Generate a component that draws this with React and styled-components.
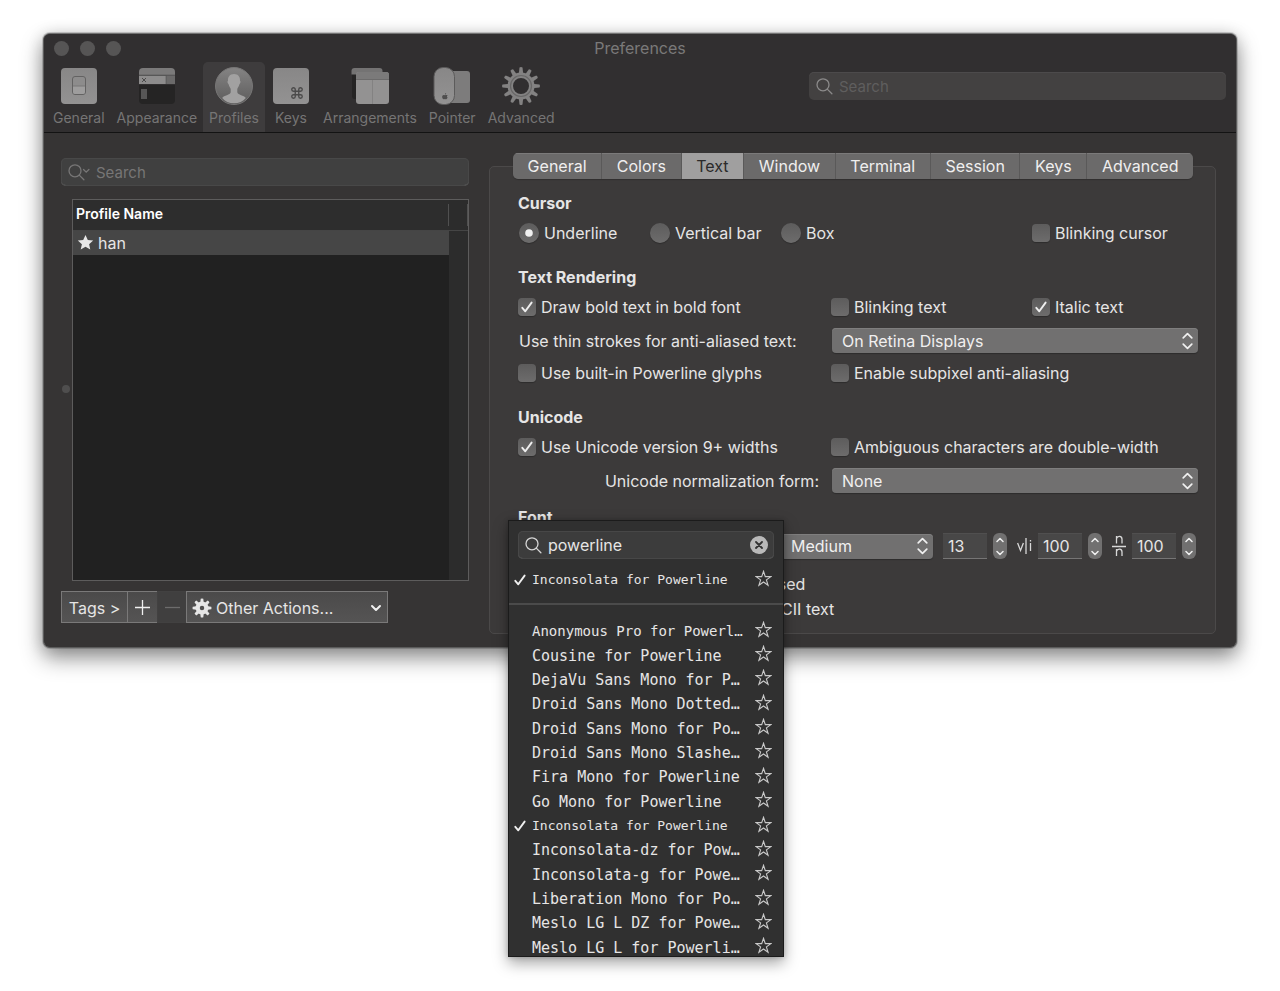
import React from "react";
import styled, { createGlobalStyle, css } from "styled-components";
import { Command } from "lucide-react";

const GlobalStyle = createGlobalStyle`
  *, *::before, *::after { box-sizing: border-box; }
  body { margin: 0; background: #fff; }
  body, button, input, select {
    font-family: Inter, "Liberation Sans", sans-serif;
    font-size: 16px;
    line-height: 24px;
    color: #e6e5e5;
  }
  button, input, select { margin: 0; padding: 0; border: 0; outline: 0; }
  h2 { margin: 0; }
`;

const Page = styled.div`
  min-height: 100vh;
  padding: 33px 43px;
`;

const Window = styled.main`
  border: 1px solid #5c5c5c;
  border-top-color: #727272;
  border-radius: 7px;
  background: #363434;
  box-shadow: 0 0 0 1px rgba(0, 0, 0, 0.16), 0 10px 22px rgba(0, 0, 0, 0.42), 0 2px 16px rgba(0, 0, 0, 0.16);
`;

const Header = styled.header`
  background: #312f30;
  border-bottom: 1px solid #131313;
  border-radius: 6px 6px 0 0;
`;

const TitleBar = styled.div`
  display: grid;
  grid-template-columns: 1fr auto 1fr;
  align-items: center;
  height: 28px;
  padding: 0 10px;
  color: #7a7979;
`;

const Lights = styled.div`
  display: flex;
  gap: 11px;
`;

const Light = styled.button`
  width: 15px;
  height: 15px;
  border-radius: 50%;
  background: #565555;
`;

const ToolRow = styled.div`
  display: flex;
  justify-content: space-between;
  padding: 0 10px 0 3px;
`;

const Tools = styled.nav`
  display: flex;
`;

const Tool = styled.button`
  display: flex;
  flex-direction: column;
  align-items: center;
  min-width: 50px;
  height: 70px;
  padding: 4px 6px 0;
  border-radius: 5px 5px 0 0;
  background: ${(p) => (p.$active ? "#3e3c3d" : "transparent")};
  color: #767575;
  font-size: 14px;
  line-height: 24px;

  svg { display: block; }
`;

const searchTones = {
  toolbar: css`background: #434141; box-shadow: inset 0 1px #4c4a4b; --hint: #5f5e5e; --glyph: #8b8a8a;`,
  list: css`background: #404040; box-shadow: inset 0 0 0 1px #484848, inset 0 -1px #686767; --hint: #777676; --glyph: #777676;`,
  menu: css`background: #3c3c3c; box-shadow: inset 0 0 0 1px #474747, inset 0 -1px #5e5e5e; --hint: #777; --glyph: #d6d6d6;`,
};

const SearchBox = styled.label`
  display: flex;
  align-items: center;
  gap: 6px;
  height: 28px;
  padding: 0 6px;
  border-radius: 5px;
  ${(p) => searchTones[p.$tone]}

  > svg { flex: none; color: var(--glyph); }
  input { flex: 1; min-width: 0; background: transparent; font-size: 16px; }
  input::placeholder { color: var(--hint); opacity: 1; font-size: 15px; }
`;

const ToolbarSearch = styled.div`
  flex: 0 1 417px;
  padding-top: 10px;
`;

const Body = styled.div`
  display: flex;
  gap: 20px;
  padding: 0 20px 0 17px;
`;

const Sidebar = styled.section`
  position: relative;
  flex: 408 1 0;
  min-width: 0;
  display: flex;
  flex-direction: column;
  padding: 25px 0 24px;
`;

const SplitDot = styled.span`
  position: absolute;
  left: 1px;
  top: 252px;
  width: 8px;
  height: 8px;
  border-radius: 50%;
  background: #4f4e4e;
`;

const ProfileList = styled.div`
  flex: 1;
  display: flex;
  margin: 13px 0 10px 11px;
  border: 1px solid #5d5c5c;
  background: #212121;
`;

const ProfileTable = styled.table`
  flex: 1;
  align-self: flex-start;
  border-collapse: collapse;

  th {
    height: 30px;
    padding: 0 3px 2px;
    border-bottom: 1px solid #454545;
    background: #2d2d2d;
    color: #fff;
    font-size: 14px;
    font-weight: 600;
    text-align: left;
  }
  td { height: 25px; padding: 0; background: #464646; }
`;

const ProfileName = styled.div`
  display: flex;
  align-items: center;
  gap: 4px;
  padding-left: 4px;
`;

const Gutter = styled.div`
  width: 19px;
  background: #2c2c2c;
`;

const GutterHead = styled.div`
  height: 31px;
  padding-top: 4px;
  border-bottom: 1px solid #454545;

  &::before {
    content: "";
    display: block;
    height: 22px;
    border-left: 1px solid #505050;
    border-right: 1px solid #505050;
    margin-left: -1px;
  }
`;

const Actions = styled.div`
  display: flex;
`;

const ActionButton = styled.button`
  display: flex;
  align-items: center;
  justify-content: center;
  gap: 4px;
  width: ${(p) => p.$width};
  height: 32px;
  padding-top: 1px;
  margin-right: -1px;
  border: 1px solid #7a7979;
  background: linear-gradient(#4b4a4a, #555454);

  &:disabled { border-color: #424141; background: #403f3f; color: #6d6c6c; }
  > svg:nth-of-type(2) { margin-left: auto; }
  ${(p) => p.$wide && css`justify-content: flex-start; padding: 1px 5px 0;`}
`;

const Detail = styled.section`
  flex: 727 1 0;
  min-width: 0;
  padding: 33px 0 13px;
`;

const Panel = styled.div`
  padding: 0 17px 12px 28px;
  border: 1px solid #4b4949;
  border-radius: 5px;
  background: #3c3a3a;
`;

const Tabs = styled.div`
  display: flex;
  margin: -14px 5px 12px -5px;
  border-radius: 5px;
  overflow: hidden;
  box-shadow: 0 1px 1px rgba(0, 0, 0, 0.2);
`;

const Tab = styled.button`
  flex: 1 1 auto;
  height: 26px;
  padding: 0 12px;
  background: ${(p) => (p.$active ? "#a09f9f" : "#6b6a6a")};
  color: ${(p) => (p.$active ? "#2b2a2a" : "#f0efef")};
  box-shadow: inset 0 1px ${(p) => (p.$active ? "#a09f9f" : "#7b7a7a")};

  & + & { border-left: 1px solid #5a5959; }
`;

const Heading = styled.h2`
  font-size: 16px;
  line-height: 24px;
  font-weight: 700;
  margin-bottom: 6px;
`;

const Group = styled.div`
  margin-bottom: ${(p) => (p.$tight ? 13 : 20)}px;
`;

const Row = styled.div`
  display: grid;
  grid-template-columns: minmax(0, 313fr) minmax(0, 201fr) minmax(0, 166fr);
  align-items: center;
  height: 24px;

  & + & { margin-top: 9px; }
`;

const Radios = styled.div`
  grid-column: span 2;
  display: grid;
  grid-template-columns: 131px 131px 1fr;
  padding-left: 1px;
`;

const OptionLabel = styled.label`
  display: flex;
  align-items: center;
  gap: 5px;
  white-space: nowrap;
`;

const Mark = styled.span`
  display: grid;
  flex: none;
  place-items: center;

  > * { grid-area: 1 / 1; }
  svg { pointer-events: none; }
  input {
    appearance: none;
    width: ${(p) => (p.$round ? 20 : 18)}px;
    height: ${(p) => (p.$round ? 20 : 18)}px;
    border-radius: ${(p) => (p.$round ? "50%" : "4px")};
    background: linear-gradient(#5d5c5c, #6d6c6c);
    box-shadow: 0 1px 1px rgba(0, 0, 0, 0.25);
  }
`;

const FieldLabel = styled.label`
  padding: 0 12px 0 1px;
  text-align: ${(p) => (p.$right ? "right" : "left")};
  white-space: nowrap;
`;

const SelectWrap = styled.span`
  grid-column: span 2;
  display: grid;
  align-items: center;
  height: 25px;
  flex: ${(p) => p.$flex || "none"};
  min-width: 0;
  margin-left: ${(p) => (p.$flex ? 0 : "1px")};

  > * { grid-area: 1 / 1; }
  svg { justify-self: end; margin-right: 4px; pointer-events: none; }
  select {
    appearance: none;
    width: 100%;
    height: 25px;
    padding: 0 26px 0 10px;
    border-radius: 4px;
    background: #717070;
    box-shadow: inset 0 1px #7f7e7e, 0 1px 1px rgba(0, 0, 0, 0.25);
    color: #f0efef;
  }
`;

const FontArea = styled.div`
  position: relative;
`;

const FontRow = styled.div`
  display: flex;
  align-items: center;
  height: 26px;
  margin: -2px 2px 12px 0;
`;

const NumberGroup = styled.div`
  display: flex;
  align-items: center;
  gap: 6px;
  margin-left: 10px;

  input {
    width: 44px;
    height: 26px;
    padding: 0 5px;
    background: #484747;
    box-shadow: inset 0 1px #504f4f, inset 0 -1px #767575;
  }
`;

const Stepper = styled.span`
  display: flex;
  flex-direction: column;
  width: 14px;
  height: 26px;
  border-radius: 6px;
  overflow: hidden;

  button {
    display: grid;
    place-items: center;
    height: 13px;
    background: #717070;
  }
`;

const FontOptions = styled.div`
  display: flex;
  height: 25px;
  padding-left: ${(p) => p.$indent};
`;

const FontMenu = styled.div`
  position: absolute;
  z-index: 2;
  left: -10px;
  top: 15px;
  width: 276px;
  height: 437px;
  overflow: hidden;
  border: 1px solid #1b1b1b;
  background: #303030;
  box-shadow: 0 6px 14px rgba(0, 0, 0, 0.36), 0 0 5px rgba(0, 0, 0, 0.2);
`;

const MenuSearch = styled.div`
  padding: 10px 9px 9px;
`;

const Clear = styled.button`
  display: grid;
  place-items: center;
  width: 18px;
  height: 18px;
  border-radius: 50%;
  background: #b9b9b9;
  color: #333;
`;

const FontList = styled.ul`
  display: flex;
  flex-direction: column;
  height: ${(p) => p.$height};
  margin: 0;
  padding: 0;
  list-style: none;
`;

const Divider = styled.hr`
  height: 2px;
  margin: 11px 0 14px;
  border: 0;
  background: #4b4b4b;
`;

const FontItem = styled.li`
  flex: 1;
  display: grid;
  grid-template-columns: 23px 1fr 28px;
  align-items: center;
  min-height: 0;
  font-family: "${(p) => p.$face}", monospace;
  font-size: ${(p) => p.$size}px;
  line-height: 24px;
  white-space: nowrap;

  button { display: grid; padding-bottom: 4px; background: transparent; }
  > svg { margin-left: 4px; }
`;

const SearchIcon = ({ arrow }) => (
  <svg width={arrow ? 23 : 18} height="18" viewBox={`0 0 ${arrow ? 23 : 18} 18`} fill="none" stroke="currentColor" strokeWidth="1.3" strokeLinecap="round">
    <circle cx="8" cy="7.8" r="6" />
    <path d="M12.500 12.400 16.900 16.800" />
    {arrow && <path d="m16.500 6.500 2.700 2.700 2.700-2.700" />}
  </svg>
);

const CheckIcon = ({ size = 14 }) => (
  <svg width={size} height={size} viewBox="0 0 14 14" fill="none" stroke="#efefef" strokeWidth="1.9" strokeLinecap="round" strokeLinejoin="round">
    <path d="M2.300 7.800 5.300 11.300 11.600 2.600" />
  </svg>
);

const PopIcon = () => (
  <svg width="13" height="18" viewBox="0 0 13 18" fill="none" stroke="#f0f0f0" strokeWidth="1.7" strokeLinecap="round" strokeLinejoin="round">
    <path d="m2.200 5.800 4.300-4.100 4.300 4.100M2.200 12.200l4.300 4.100 4.300-4.100" />
  </svg>
);

const Chevron = ({ up, width = 8 }) => (
  <svg width={width} height={width === 8 ? 6 : 8} viewBox="0 0 8 6" fill="none" stroke="#f0f0f0" strokeWidth="1.5" strokeLinecap="round" strokeLinejoin="round">
    <path d={up ? "M1 4.500 4 1.500 7 4.500" : "M1 1.500 4 4.500 7 1.500"} />
  </svg>
);

const STAR = "M8.500 1.300 10.300 6.600H15.900L11.400 9.900 13.100 15.300 8.500 12 3.900 15.300 5.600 9.900 1.100 6.600H6.700Z";

const Star = ({ filled }) => (
  <svg width="17" height="17" viewBox="0 0 17 17" fill={filled ? "#e6e6e6" : "none"} stroke={filled ? "none" : "#c9c9c9"} strokeWidth="1.1">
    <path d={filled ? "M8.500 1 10.800 6.100 16.200 6.600 12.100 10.200 13.300 15.600 8.500 12.700 3.700 15.600 4.900 10.200.8 6.600 6.200 6.100Z" : STAR} />
  </svg>
);

const Gear = ({ size, teeth, color, hole, body, toothWidth }) => (
  <svg width={size} height={size} viewBox="-20 -20 40 40" fill={color}>
    {Array.from({ length: teeth }, (_, i) => (
      <path
        key={i}
        transform={`rotate(${(i * 360) / teeth})`}
        d={`M${-toothWidth - 0.8} -11 L${-toothWidth} -18.500 Q0 -19.500 ${toothWidth} -18.500 L${toothWidth + 0.8} -11Z`}
      />
    ))}
    <circle r={(body + hole) / 2} fill="none" stroke={color} strokeWidth={body - hole} />
    {size > 30 && <circle r="10.500" fill="none" stroke="#686767" strokeWidth="1.200" />}
  </svg>
);

const ToolIcon = ({ children }) => (
  <svg width="40" height="40" viewBox="0 0 40 40">
    <defs>
      <linearGradient id="plate" x2="0" y2="1">
        <stop stopColor="#888787" />
        <stop offset="1" stopColor="#939292" />
      </linearGradient>
      <linearGradient id="disc" x2="0" y2="1">
        <stop stopColor="#858484" />
        <stop offset="1" stopColor="#5c5b5b" />
      </linearGradient>
    </defs>
    {children}
  </svg>
);

const tools = [
  {
    name: "General",
    icon: (
      <ToolIcon>
        <rect x="2" y="2" width="36" height="36" rx="4" fill="url(#plate)" />
        <rect x="13.500" y="10.500" width="13" height="18" rx="2.500" fill="#8d8c8c" stroke="#636262" />
        <path d="M14 20h12v6q0 2-2 2h-8q-2 0-2-2z" fill="#9e9d9d" />
        <path d="M14 20h12" stroke="#777676" />
      </ToolIcon>
    ),
  },
  {
    name: "Appearance",
    icon: (
      <ToolIcon>
        <path d="M2 19h36v15q0 4-4 4H6q-4 0-4-4z" fill="#252424" />
        <path d="M2 9V6q0-4 4-4h28q4 0 4 4v3z" fill="#7b7a7a" />
        <path d="M2 9.500h36V18H2z" fill="#8d8c8c" />
        <path d="M29.500 9.500H38V18h-8.500z" fill="#6b6a6a" />
        <path d="M2 9.200h36M29.200 9v9" stroke="#555454" />
        <path d="m5 12 4 4m0-4-4 4" stroke="#4b4a4a" />
        <rect x="4" y="23" width="6" height="10" fill="#575656" />
      </ToolIcon>
    ),
  },
  {
    name: "Profiles",
    active: true,
    icon: (
      <ToolIcon>
        <circle cx="20" cy="20" r="18.500" fill="url(#disc)" stroke="#777676" />
        <path
          d="M20 8c-4.200 0-6.300 2.900-6 6.800-.8.200-.7 2.400.7 3.700.5 2.200 1.600 3.300 2 4.400v3.400c-.6 2.700-6.700 3.200-8.500 5.600C11 35.500 15 37.200 20 37.200s9-1.700 11.800-5.300c-1.800-2.400-7.900-2.900-8.500-5.600v-3.400c.4-1.100 1.500-2.200 2-4.400 1.400-1.300 1.500-3.500.7-3.700.3-3.900-1.800-6.800-6-6.800Z"
          fill="#a2a1a1"
        />
      </ToolIcon>
    ),
  },
  {
    name: "Keys",
    icon: (
      <ToolIcon>
        <rect x="2" y="2" width="36" height="36" rx="4" fill="url(#plate)" />
        <Command x="19" y="20" width="14" height="14" color="#4b4a4a" strokeWidth={2.3} />
      </ToolIcon>
    ),
  },
  {
    name: "Arrangements",
    icon: (
      <ToolIcon>
        <path d="M2 8h6v25H5q-3 0-3-3z" fill="#252424" />
        <path d="M1.500 8.500V5q0-3 3-3h25q3 0 3 3v3.500z" fill="#747373" />
        <rect x="6" y="6" width="33" height="32" rx="3" fill="#939292" />
        <path d="M6 13.500V9q0-3 3-3h27q3 0 3 3v4.500z" fill="#7b7a7a" />
        <path d="M6 13.500h33" stroke="#6c6b6b" />
        <path d="M22.500 14v24" stroke="#838282" />
      </ToolIcon>
    ),
  },
  {
    name: "Pointer",
    icon: (
      <ToolIcon>
        <rect x="15" y="5" width="23" height="32" rx="3" fill="#7d7c7c" />
        <rect x="2" y="1.500" width="20.500" height="37" rx="9" fill="url(#plate)" stroke="#5c5b5b" />
        <path d="M13 28.500c.8-.2 1.200-.8 1.100-1.600-.8.100-1.200.8-1.100 1.600Zm-.1.700c-.8 0-1.700-.5-2.500.5-.7 1.200.1 3.300 1.200 3.500.5 0 .9-.3 1.300-.3s.8.300 1.300.3c.7-.1 1.200-1 1.400-1.600-1-.6-.8-1.600 0-2.100-.8-.8-1.600-.3-2.700-.3Z" fill="#4f4e4e" />
      </ToolIcon>
    ),
  },
  { name: "Advanced", icon: <Gear size={40} teeth={12} color="#838282" hole={8} body={13.5} toothWidth={1.5} /> },
];

const tabs = ["General", "Colors", "Text", "Window", "Terminal", "Session", "Keys", "Advanced"];

const fonts = [
  ["Anonymous Pro for Powerl…", "DejaVu Sans Mono", 14],
  ["Cousine for Powerline", "DejaVu Sans Mono", 15],
  ["DejaVu Sans Mono for P…", "DejaVu Sans Mono", 15],
  ["Droid Sans Mono Dotted…", "DejaVu Sans Mono", 15],
  ["Droid Sans Mono for Po…", "DejaVu Sans Mono", 15],
  ["Droid Sans Mono Slashe…", "DejaVu Sans Mono", 15],
  ["Fira Mono for Powerline", "DejaVu Sans Mono", 15],
  ["Go Mono for Powerline", "DejaVu Sans Mono", 15],
  ["Inconsolata for Powerline", "DejaVu Sans Mono", 13, true],
  ["Inconsolata-dz for Pow…", "DejaVu Sans Mono", 15],
  ["Inconsolata-g for Powe…", "DejaVu Sans Mono", 15],
  ["Liberation Mono for Po…", "DejaVu Sans Mono", 15],
  ["Meslo LG L DZ for Powe…", "DejaVu Sans Mono", 15],
  ["Meslo LG L for Powerli…", "DejaVu Sans Mono", 15],
];

const Check = ({ label, checked }) => (
  <OptionLabel>
    <Mark>
      <input type="checkbox" defaultChecked={checked} />
      {checked && <CheckIcon />}
    </Mark>
    {label}
  </OptionLabel>
);

const Radio = ({ label, checked }) => (
  <OptionLabel>
    <Mark $round>
      <input type="radio" name="cursor" defaultChecked={checked} />
      {checked && (
        <svg width="8" height="8" viewBox="0 0 8 8">
          <circle cx="4" cy="4" r="3.800" fill="#f0f0f0" />
        </svg>
      )}
    </Mark>
    {label}
  </OptionLabel>
);

const Select = ({ id, value, label, flex }) => (
  <SelectWrap $flex={flex}>
    <select id={id} aria-label={label} defaultValue={value}>
      <option>{value}</option>
    </select>
    <PopIcon />
  </SelectWrap>
);

const NumberField = ({ label, value, icon }) => (
  <NumberGroup>
    {icon}
    <input aria-label={label} defaultValue={value} />
    <Stepper>
      <button aria-label={`Increase ${label}`}><Chevron up /></button>
      <button aria-label={`Decrease ${label}`}><Chevron /></button>
    </Stepper>
  </NumberGroup>
);

const SpacingX = () => (
  <svg width="15" height="18" viewBox="0 0 15 18" fill="none" stroke="#d8d8d8" strokeWidth="1.300">
    <path d="m.6 6 2.900 7.500L6.400 6M9 1v16M13.500 6v8M13.500 3v1.500" />
  </svg>
);

const SpacingY = () => (
  <svg width="14" height="22" viewBox="0 0 14 22" fill="none" stroke="#d8d8d8" strokeWidth="1.300">
    <path d="M0 11.500h14M4.500 8.500V1m0 2.500c1-2.900 5.500-2.900 5.500.8v4.200M4.500 21v-7m0 2.200c1-2.900 5.500-2.900 5.500.8v4" />
  </svg>
);

const FontEntry = ({ name, face, size, checked }) => (
  <FontItem $face={face} $size={size}>
    {checked ? <CheckIcon /> : <span />}
    <span>{name}</span>
    <button aria-label={`Favorite ${name}`}><Star /></button>
  </FontItem>
);

export default function App() {
  return (
    <Page>
      <GlobalStyle />
      <Window>
        <Header>
          <TitleBar>
            <Lights>
              <Light aria-label="Close" />
              <Light aria-label="Minimize" />
              <Light aria-label="Zoom" />
            </Lights>
            <span>Preferences</span>
          </TitleBar>
          <ToolRow>
            <Tools>
              {tools.map((t) => (
                <Tool key={t.name} $active={t.active}>
                  {t.icon}
                  {t.name}
                </Tool>
              ))}
            </Tools>
            <ToolbarSearch>
              <SearchBox $tone="toolbar">
                <SearchIcon />
                <input aria-label="Search preferences" placeholder="Search" />
              </SearchBox>
            </ToolbarSearch>
          </ToolRow>
        </Header>

        <Body>
          <Sidebar>
            <SearchBox $tone="list">
              <SearchIcon arrow />
              <input aria-label="Search profiles" placeholder="Search" />
            </SearchBox>
            <ProfileList>
              <ProfileTable>
                <thead>
                  <tr><th>Profile Name</th></tr>
                </thead>
                <tbody>
                  <tr><td><ProfileName><Star filled />han</ProfileName></td></tr>
                </tbody>
              </ProfileTable>
              <Gutter><GutterHead /></Gutter>
            </ProfileList>
            <SplitDot />
            <Actions>
              <ActionButton $width="67px">Tags &gt;</ActionButton>
              <ActionButton $width="31px" aria-label="Add profile">
                <svg width="15" height="15" viewBox="0 0 15 15" stroke="#f0f0f0" strokeWidth="1.300"><path d="M7.500 0v15M0 7.500h15" /></svg>
              </ActionButton>
              <ActionButton $width="30px" aria-label="Remove profile" disabled>
                <svg width="15" height="15" viewBox="0 0 15 15" stroke="currentColor" strokeWidth="1.300"><path d="M0 7.500h15" /></svg>
              </ActionButton>
              <ActionButton $width="202px" $wide>
                <Gear size={20} teeth={8} color="#e6e6e6" hole={4.5} body={13} toothWidth={2.6} />
                Other Actions...
                <Chevron width={12} />
              </ActionButton>
            </Actions>
          </Sidebar>

          <Detail>
            <Panel>
              <Tabs role="tablist">
                {tabs.map((t) => (
                  <Tab key={t} role="tab" aria-selected={t === "Text"} $active={t === "Text"}>{t}</Tab>
                ))}
              </Tabs>

              <Group>
                <Heading>Cursor</Heading>
                <Row>
                  <Radios>
                    <Radio label="Underline" checked />
                    <Radio label="Vertical bar" />
                    <Radio label="Box" />
                  </Radios>
                  <Check label="Blinking cursor" />
                </Row>
              </Group>

              <Group>
                <Heading>Text Rendering</Heading>
                <Row>
                  <Check label="Draw bold text in bold font" checked />
                  <Check label="Blinking text" />
                  <Check label="Italic text" checked />
                </Row>
                <Row>
                  <FieldLabel htmlFor="strokes">Use thin strokes for anti-aliased text:</FieldLabel>
                  <Select id="strokes" value="On Retina Displays" />
                </Row>
                <Row>
                  <Check label="Use built-in Powerline glyphs" />
                  <Check label="Enable subpixel anti-aliasing" />
                </Row>
              </Group>

              <Group $tight>
                <Heading>Unicode</Heading>
                <Row>
                  <Check label="Use Unicode version 9+ widths" checked />
                  <Check label="Ambiguous characters are double-width" />
                </Row>
                <Row>
                  <FieldLabel $right htmlFor="normal">Unicode normalization form:</FieldLabel>
                  <Select id="normal" value="None" />
                </Row>
              </Group>

              <FontArea>
                <Heading>Font</Heading>
                <FontRow>
                  <Select label="Font family" value="Inconsolata" flex="263 1 0" />
                  <Select label="Font weight" value="Medium" flex="152 1 0" />
                  <NumberField label="font size" value="13" />
                  <NumberField label="horizontal spacing" value="100" icon={<SpacingX />} />
                  <NumberField label="vertical spacing" value="100" icon={<SpacingY />} />
                </FontRow>
                <FontOptions $indent="174px">
                  <Check label="Anti-aliased" checked />
                </FontOptions>
                <FontOptions $indent="8px">
                  <Check label="Use a different font for non-ASCII text" />
                </FontOptions>

                <FontMenu>
                  <MenuSearch>
                    <SearchBox $tone="menu">
                      <SearchIcon />
                      <input aria-label="Search fonts" defaultValue="powerline" />
                      <Clear aria-label="Clear search">
                        <svg width="8" height="8" viewBox="0 0 8 8" stroke="currentColor" strokeWidth="1.800" strokeLinecap="round"><path d="m1 1 6 6m0-6-6 6" /></svg>
                      </Clear>
                    </SearchBox>
                  </MenuSearch>
                  <FontList $height="24px">
                    <FontEntry name="Inconsolata for Powerline" face="DejaVu Sans Mono" size={13} checked />
                  </FontList>
                  <Divider />
                  <FontList $height="341px">
                    {fonts.map(([name, face, size, checked]) => (
                      <FontEntry key={name} name={name} face={face} size={size} checked={checked} />
                    ))}
                  </FontList>
                </FontMenu>
              </FontArea>
            </Panel>
          </Detail>
        </Body>
      </Window>
    </Page>
  );
}
